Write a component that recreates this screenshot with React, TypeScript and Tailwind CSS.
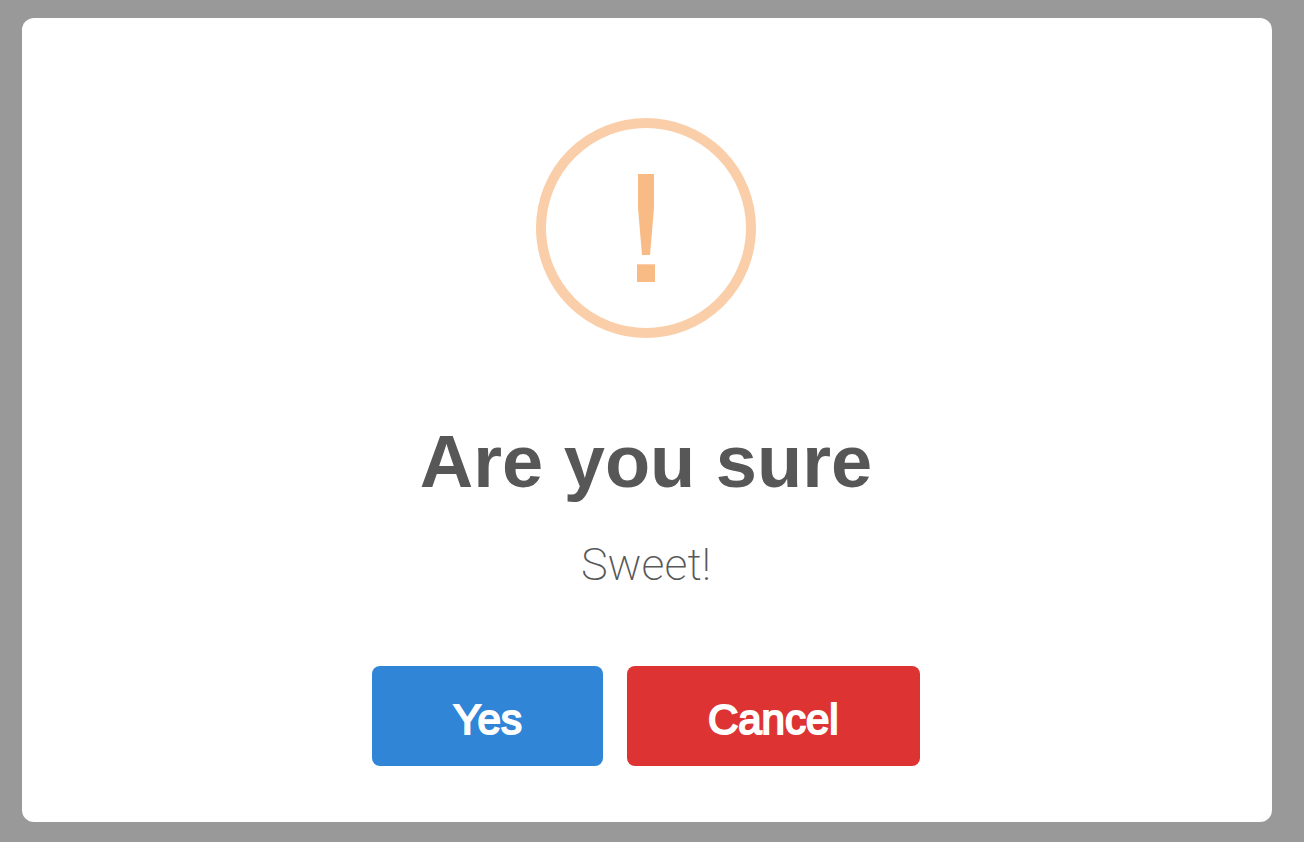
export default function App() {
  return (
    <div className="flex min-h-screen bg-[#999999] pt-[18px] pr-8 pb-5 pl-[22px] font-['Liberation_Sans',Arial,sans-serif]">
      <div
        role="dialog"
        aria-labelledby="dialog-title"
        aria-describedby="dialog-content"
        className="flex w-full flex-col items-center rounded-xl bg-white pt-[100px] pr-[2px] pb-14 text-center text-[#575757]"
      >
        <svg width="220" height="220" viewBox="0 0 220 220" aria-hidden="true">
          <circle cx="110" cy="110" r="105" fill="none" stroke="#facea8" strokeWidth="10" />
          <path d="M102 56h16v34l-4 47h-8l-4-47z" fill="#f8bb86" />
          <path d="M101 146.3h18V164h-18z" fill="#f8bb86" />
        </svg>
        <h2 id="dialog-title" className="mt-20 text-[74px] leading-[88px] font-bold">
          Are you sure
        </h2>
        <p id="dialog-content" className="mt-6 font-['Roboto','Liberation_Sans',sans-serif] text-[45px] leading-[70px] font-extralight">
          Sweet!
        </p>
        <div className="mt-auto flex gap-6">
          <button type="button" className="h-[100px] rounded-lg bg-[#3085d6] px-[81px] pt-1.5 text-[42px] text-white [-webkit-text-stroke:2px_white]">
            Yes
          </button>
          <button type="button" className="h-[100px] rounded-lg bg-[#dd3333] px-[81px] pt-1.5 text-[42px] text-white [-webkit-text-stroke:2px_white]">
            Cancel
          </button>
        </div>
      </div>
    </div>
  );
}
